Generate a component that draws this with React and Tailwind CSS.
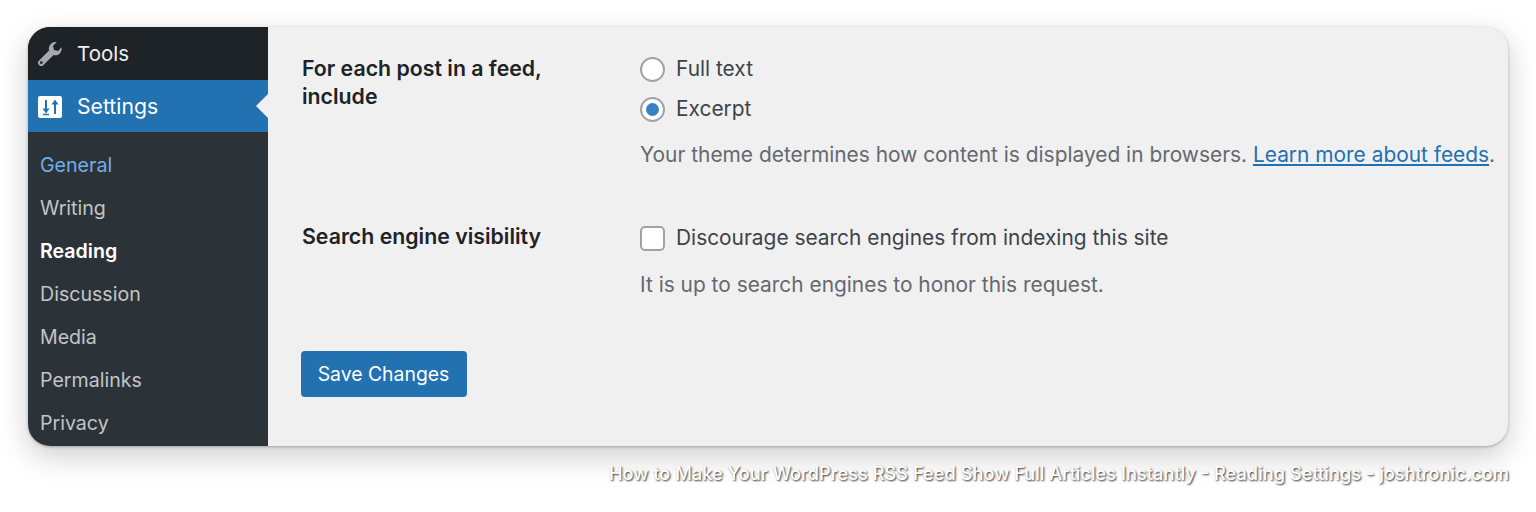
const subItems = [
  { label: 'General', className: 'text-[#72aee6]' },
  { label: 'Writing', className: 'text-[#c3c4c7]' },
  { label: 'Reading', className: 'text-white font-semibold' },
  { label: 'Discussion', className: 'text-[#c3c4c7]' },
  { label: 'Media', className: 'text-[#c3c4c7]' },
  { label: 'Permalinks', className: 'text-[#c3c4c7]' },
  { label: 'Privacy', className: 'text-[#c3c4c7]' },
]

function WrenchIcon() {
  return (
    <svg width="27" height="27" viewBox="0 0 24 24" fill="#a7aaad">
      <path d="M22.6 5.6c.5 1.900 0 4-1.500 5.400-1.500 1.500-3.600 2-5.500 1.400L6.500 21.500c-1 1-2.600 1-3.600 0l-.4-.4c-1-1-1-2.600 0-3.600l9.100-9.100c-.6-1.900-.1-4 1.400-5.500C14.400 1 16.500.5 18.400 1l-3.300 3.300.9 3.700 3.700.9 2.900-3.300zM4.700 17.900a1.300 1.300 0 1 0 0 2.600 1.300 1.300 0 0 0 0-2.600z" fillRule="evenodd" />
    </svg>
  )
}

function SettingsIcon() {
  return (
    <svg width="24" height="22" viewBox="0 0 24 22">
      <rect width="24" height="22" rx="2" fill="#fff" />
      <path d="M8 4v9M17 8v10" stroke="#2271b1" strokeWidth="2" />
      <path d="M4.500 12.500h7L8 17.500zM13.500 8.500h7L17 3.500z" fill="#2271b1" />
      <path d="M5 18.500h6" stroke="#2271b1" strokeWidth="1.500" />
    </svg>
  )
}

function Radio({ checked }) {
  return (
    <span className="w-[25px] h-[25px] rounded-full bg-white border-2 border-[#a0a3a6] flex items-center justify-center shrink-0">
      {checked && <span className="w-[13px] h-[13px] rounded-full bg-[#3582c4]" />}
    </span>
  )
}

export default function App() {
  return (
    <div className="w-[1536px] h-[512px] bg-white pt-[27px] pl-[28px] overflow-hidden text-[20.9px] text-[#3c434a]" style={{ fontFamily: 'Inter, "Noto Sans", sans-serif' }}>
      <div className="w-[1480px] h-[419px] flex rounded-[22px] overflow-hidden bg-[#f0f0f1] shadow-[0_10px_30px_rgba(0,0,0,0.2),0_1px_3px_rgba(0,0,0,0.25)]">
        <aside className="w-[240px] shrink-0 bg-[#2c3338] flex flex-col">
          <div className="h-[53px] bg-[#1d2327] flex items-center pl-[8px] pt-[2px] gap-[14px] text-[20.5px] text-[#f0f0f1]">
            <WrenchIcon />
            <span>Tools</span>
          </div>
          <div className="h-[52px] bg-[#2271b1] flex items-center pl-[10px] pt-[1px] gap-[15px] text-[21.2px] text-white relative">
            <SettingsIcon />
            <span>Settings</span>
            <span className="absolute right-0 top-[14px] w-0 h-0 border-y-[12px] border-y-transparent border-r-[12px] border-r-[#f0f0f1]" />
          </div>
          <nav className="flex flex-col pt-[12px] pl-[12px] text-[19.6px]">
            {subItems.map((item) => (
              <a key={item.label} className={`h-[43px] leading-[43px] ${item.className}`}>{item.label}</a>
            ))}
          </nav>
        </aside>
        <main className="flex-1 pl-[34px] pt-[22px]">
          <div className="flex">
            <div className="w-[338px] text-[21.3px] font-semibold text-[#1d2327] leading-[28px] pt-[5px]">For each post in a feed,<br />include</div>
            <div>
              <label className="flex items-center gap-[11px] h-[40px]"><Radio />Full text</label>
              <label className="flex items-center gap-[11px] h-[40px]"><Radio checked />Excerpt</label>
              <p className="mt-[12px] leading-[28px] text-[#646970] whitespace-nowrap">
                Your theme determines how content is displayed in browsers. <a className="text-[#2271b1] underline">Learn more about feeds</a>.
              </p>
            </div>
          </div>
          <div className="flex mt-[53px]">
            <div className="w-[338px] text-[21.3px] font-semibold text-[#1d2327] leading-[28px]">Search engine visibility</div>
            <div>
              <label className="flex items-center gap-[11px] h-[28px] mt-[2px]">
                <span className="w-[25px] h-[25px] rounded-[5px] bg-white border-2 border-[#a0a3a6] shrink-0" />
                Discourage search engines from indexing this site
              </label>
              <p className="mt-[19px] leading-[28px] text-[#646970]">It is up to search engines to honor this request.</p>
            </div>
          </div>
          <button className="mt-[52px] -ml-[1px] w-[166px] h-[46px] pt-[1px] pr-[1px] rounded-[4px] bg-[#2271b1] text-[19.4px] text-white">Save Changes</button>
        </main>
      </div>
      <div className="w-[1481px] text-right mt-[13px] text-[18.25px] leading-[28px] text-white font-medium whitespace-nowrap [text-shadow:1px_1px_2px_rgba(0,0,0,0.8)]">
        How to Make Your WordPress RSS Feed Show Full Articles Instantly - Reading Settings - joshtronic.com
      </div>
    </div>
  )
}
